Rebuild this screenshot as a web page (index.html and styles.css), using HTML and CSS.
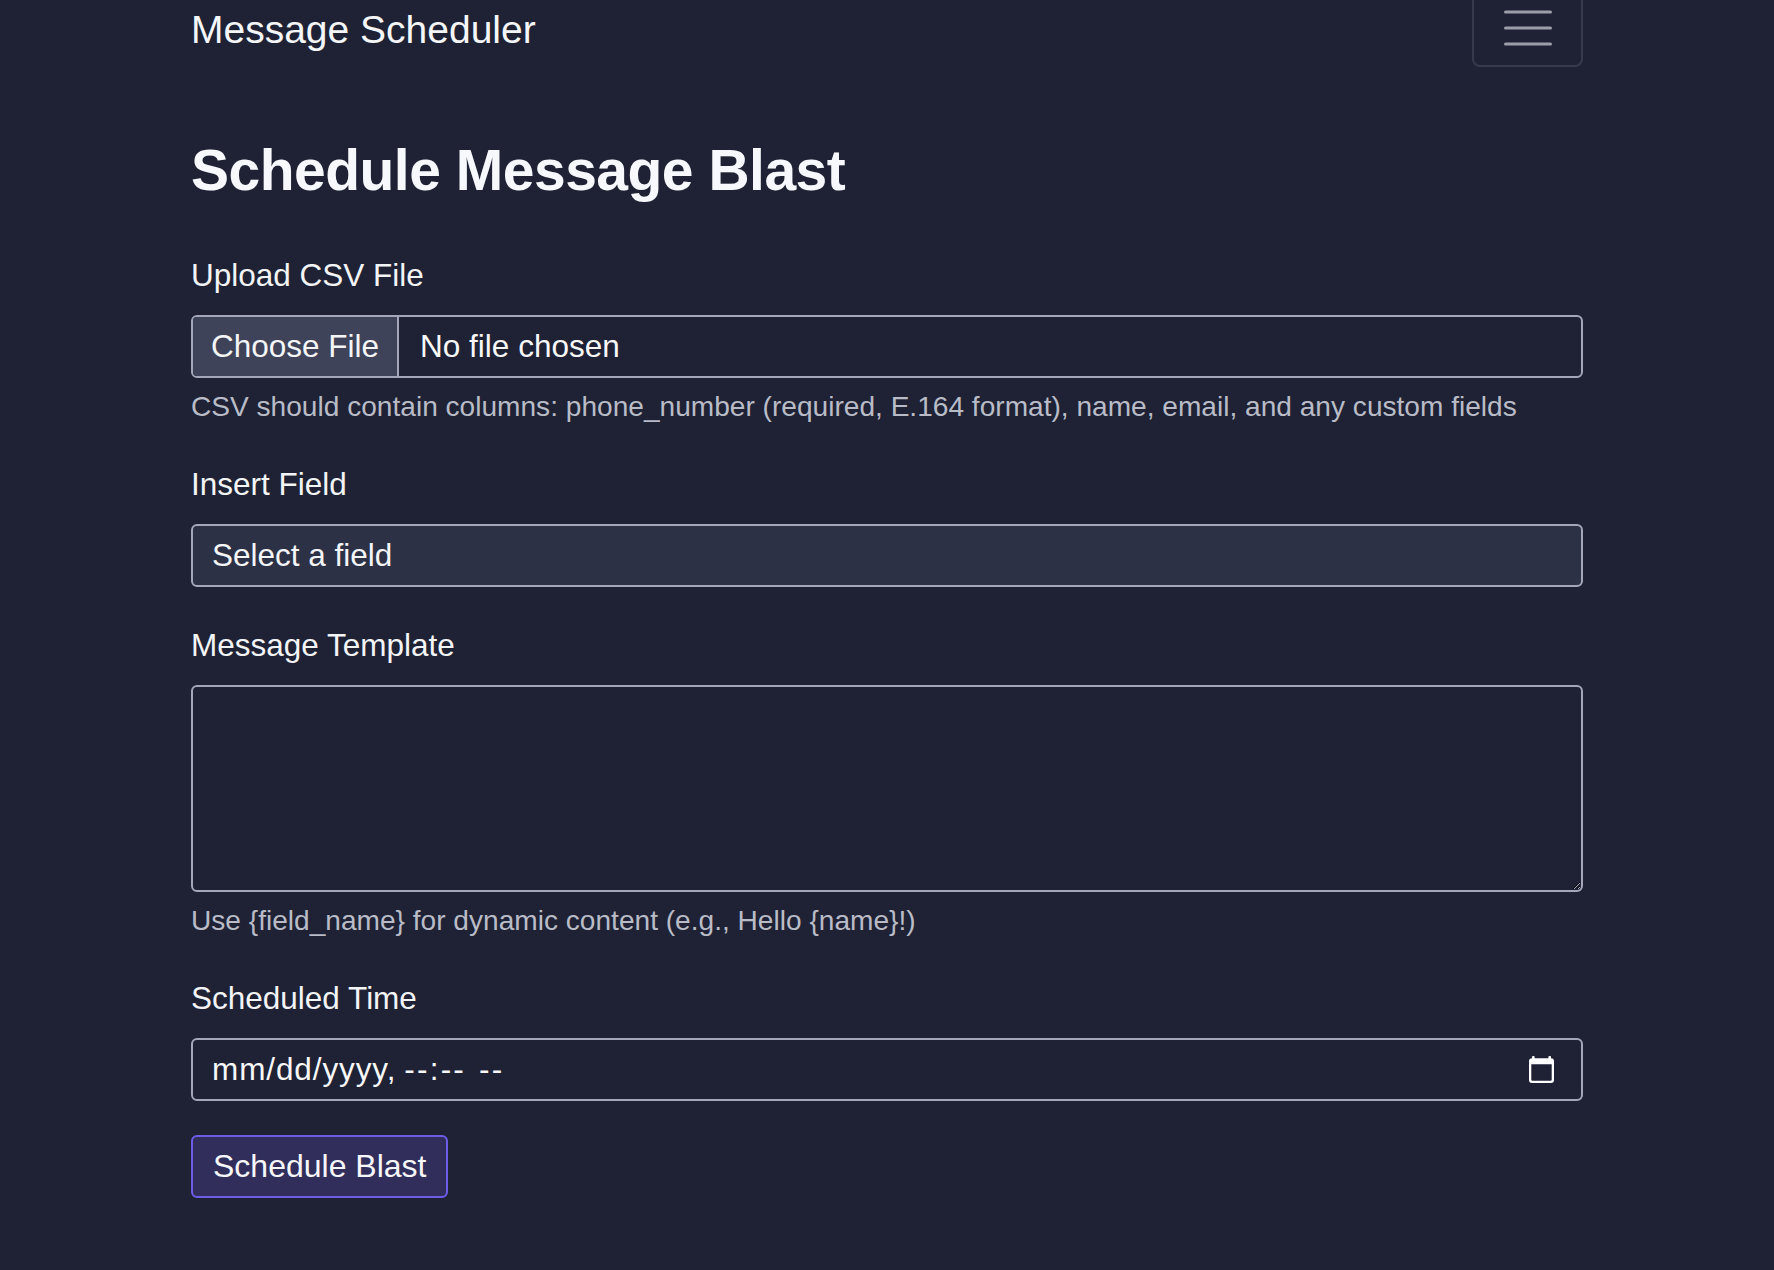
FILE: index.html
```html
<!DOCTYPE html>
<html lang="en">
<head>
<meta charset="utf-8">
<title>Message Scheduler</title>
<link rel="stylesheet" href="styles.css">
</head>
<body>
<div class="container">
  <nav class="navbar">
    <a class="brand" href="#">Message Scheduler</a>
    <button class="toggler" type="button" aria-label="Toggle navigation">
      <svg width="48" height="36" viewBox="0 0 48 36" aria-hidden="true">
        <path d="M1.5 2h45M1.5 18h45M1.5 34h45" stroke="#9b9ea8" stroke-width="3" stroke-linecap="round" fill="none"/>
      </svg>
    </button>
  </nav>

  <main>
    <h1 class="title">Schedule Message Blast</h1>
    <form class="form">
      <div class="form-group">
        <label class="form-label" for="csv">Upload CSV File</label>
        <label class="file-control">
          <input id="csv" class="visually-hidden" type="file" accept=".csv">
          <span class="file-btn">Choose File</span>
          <span class="file-name">No file chosen</span>
        </label>
        <div class="form-help">CSV should contain columns: phone_number (required, E.164 format), name, email, and any custom fields</div>
      </div>

      <div class="form-group">
        <label class="form-label" for="field">Insert Field</label>
        <select id="field" class="select-control">
          <option>Select a field</option>
        </select>
      </div>

      <div class="form-group">
        <label class="form-label" for="tpl">Message Template</label>
        <textarea id="tpl" class="textarea-control"></textarea>
        <div class="form-help">Use {field_name} for dynamic content (e.g., Hello {name}!)</div>
      </div>

      <div class="form-group form-group--last">
        <label class="form-label" for="when">Scheduled Time</label>
        <div class="date-control" id="when">
          <span class="date-text"><span class="dt-date">mm/dd/yyyy,</span><span class="dt-seg dt-time">--:--</span><span class="dt-seg dt-ampm">--</span></span>
          <svg class="cal-icon" width="25" height="27" viewBox="0 0 25 27" aria-hidden="true">
            <rect x="3" y="0" width="2.6" height="5" rx="1" fill="#ffffff"/>
            <rect x="19.4" y="0" width="2.6" height="5" rx="1" fill="#ffffff"/>
            <path fill="#ffffff" fill-rule="evenodd" d="M3 2.3h19a3 3 0 0 1 3 3V24a3 3 0 0 1-3 3H3a3 3 0 0 1-3-3V5.3a3 3 0 0 1 3-3zM2.3 8.3v15.4a1 1 0 0 0 1 1h18.4a1 1 0 0 0 1-1V8.3z"/>
          </svg>
        </div>
      </div>

      <button class="btn-submit" type="submit">Schedule Blast</button>
    </form>
  </main>
</div>
</body>
</html>
```

FILE: styles.css
```css
* { box-sizing: border-box; }

html, body {
  margin: 0;
  padding: 0;
  background: #1e2234;
}

body {
  font-family: "Liberation Sans", Arial, sans-serif;
  color: #f2f3f5;
  font-size: 31.5px;
}

.container {
  width: 1392px;
  margin: 0 auto;
}

/* navbar */
.navbar {
  display: flex;
  justify-content: space-between;
  align-items: flex-start;
  height: 80px;
  margin-top: -13px;
}

.brand {
  margin-top: 18.5px;
  font-size: 39px;
  line-height: 48px;
  color: #f5f6f8;
  text-decoration: none;
}

.toggler {
  width: 111px;
  height: 80px;
  padding: 0;
  background: transparent;
  border: 2px solid #363a4d;
  border-radius: 8px;
  display: flex;
  align-items: center;
  justify-content: center;
  padding-top: 2px;
}

.toggler svg { display: block; }

/* heading */
.title {
  margin: 68.25px 0 51px;
  font-size: 57px;
  line-height: 70px;
  font-weight: 700;
  letter-spacing: -0.5px;
  color: #f6f8fb;
}

/* form */
.form { margin: 0; }

.form-group {
  margin-bottom: 39px;
}

.form-group--last {
  margin-bottom: 34px;
}

.form-label {
  display: block;
  margin-bottom: 21px;
  font-size: 31.5px;
  line-height: 38px;
  color: #f3f4f6;
}

.form-help {
  margin-top: 9px;
  font-size: 28.1px;
  line-height: 39px;
  color: #b9bcc7;
}

.visually-hidden {
  position: absolute;
  width: 1px;
  height: 1px;
  overflow: hidden;
  clip: rect(0 0 0 0);
  white-space: nowrap;
}

.file-control {
  display: flex;
  align-items: stretch;
  height: 63px;
  border: 2px solid #a3a7b9;
  border-radius: 6px;
  overflow: hidden;
  cursor: pointer;
}

.file-btn {
  padding: 0 18px;
  background: #3e4359;
  border-right: 2px solid #a3a7b9;
  line-height: 59px;
  color: #f4f5f7;
}

.file-name {
  padding-left: 21px;
  line-height: 59px;
  color: #f7f7f8;
}

.select-control {
  display: block;
  width: 100%;
  height: 63px;
  margin: 0;
  padding: 0 19px;
  appearance: none;
  -webkit-appearance: none;
  background: #2d3146;
  border: 2px solid #a3a7b9;
  border-radius: 6px;
  font-family: inherit;
  font-size: 31.5px;
  line-height: 59px;
  color: #f4f5f7;
}

.textarea-control {
  display: block;
  width: 100%;
  height: 207px;
  margin: 0;
  padding: 10px 19px;
  background: transparent;
  border: 2px solid #a3a7b9;
  border-radius: 6px;
  font-family: inherit;
  font-size: 31.5px;
  color: #f4f5f7;
  resize: vertical;
  color-scheme: dark;
}

.date-control {
  display: flex;
  align-items: center;
  justify-content: space-between;
  height: 63px;
  padding: 0 27px 0 19px;
  border: 2px solid #a3a7b9;
  border-radius: 6px;
}

.date-text {
  display: flex;
  line-height: 59px;
  color: #f7f7f8;
}

.dt-date {
  letter-spacing: 0.9px;
}

.dt-seg {
  letter-spacing: 2.2px;
}

.dt-time {
  margin-left: 8px;
}

.dt-ampm {
  margin-left: 13px;
}

.cal-icon {
  display: block;
  margin-top: -1px;
}

.btn-submit {
  display: block;
  height: 63px;
  margin: 0;
  padding: 0 20px;
  background: #312e5c;
  border: 2px solid #6c5de8;
  border-radius: 6px;
  font-family: inherit;
  font-size: 32px;
  line-height: 59px;
  color: #f7f7fa;
  cursor: pointer;
}
```
